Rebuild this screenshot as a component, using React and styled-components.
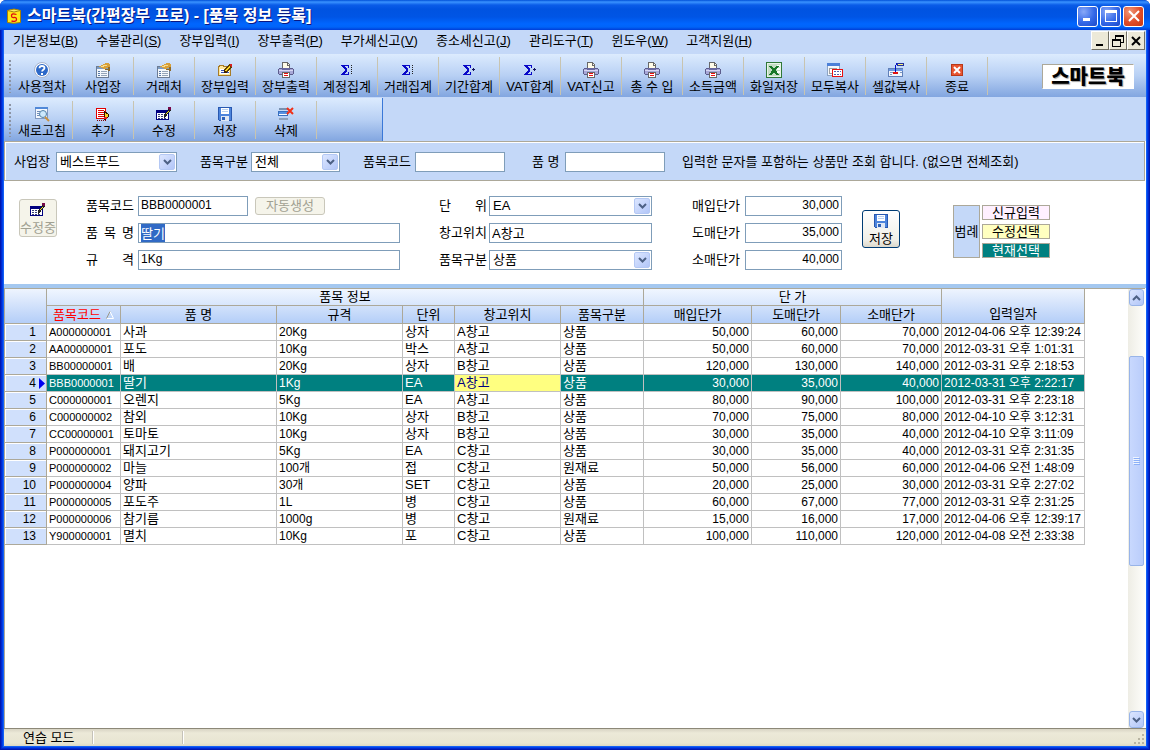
import React, { useEffect, useRef } from "react";
import styled, { createGlobalStyle } from "styled-components";

const UI_FONT = '"Liberation Sans", "Noto Sans CJK KR", sans-serif';

const GlobalStyle = createGlobalStyle`
  *, *::before, *::after { box-sizing: border-box; }
  body { margin: 0; background: #fff; }
  body, button, input, select { font-family: ${UI_FONT}; font-size: 13px; line-height: 16px; color: #000; }
  ::selection { background: #316ac5; color: #fff; }
`;

/* ---------- window frame ---------- */

const Window = styled.div`
  display: flex;
  flex-direction: column;
  min-height: 100vh;
  border-radius: 6px 6px 0 0;
  background: #0018b0;
`;

const Body = styled.main`
  flex: 1;
  display: flex;
  flex-direction: column;
  margin: 0 4px 4px;
  background: #fff;
  box-shadow: 0 0 0 1px #1460f4, 0 0 0 2px #0040e8, 0 0 0 3px #0028d0;
`;

const TitleBar = styled.header`
  position: relative;
  display: flex;
  align-items: center;
  height: 30px;
  padding: 2px 6px 0 6px;
  gap: 5px;
  border-radius: 6px 6px 0 0;
  background: linear-gradient(#0050d8 0, #3a93ff 2px, #0a5ce8 5px, #0053e1 9px, #0055e5 17px, #0066ff 24px, #0064f8 27px, #003dd7 30px);
`;

const Title = styled.h1`
  flex: 1;
  margin: 0;
  font-size: 16px;
  line-height: 20px;
  font-weight: 700;
  color: #fff;
  text-shadow: 1px 1px 0 #0a1883;
`;

const CaptionButtons = styled.div`
  display: flex;
  gap: 2px;
`;

const CaptionButton = styled.button`
  display: grid;
  place-items: center;
  width: 21px;
  height: 21px;
  padding: 0;
  border: 1px solid #fff;
  border-radius: 3px;
  background: ${(p) =>
    p.$danger
      ? "radial-gradient(circle at 30% 25%, #f09878, #e04c28 55%, #c83810)"
      : "radial-gradient(circle at 30% 25%, #88a8f8, #3468e8 55%, #1c48c8)"};
`;

/* ---------- menu ---------- */

const MenuBar = styled.nav`
  display: flex;
  align-items: flex-start;
  justify-content: space-between;
  height: 24px;
  padding: 1px 1px 0 9px;
  background: #c4d8f8;
`;

const Menu = styled.ul`
  display: flex;
  gap: 18px;
  margin: 0;
  padding: 0;
  line-height: 20px;
  list-style: none;
`;

const MenuLink = styled.a`
  color: #000;
  text-decoration: none;
  white-space: nowrap;
`;

const MdiButtons = styled.div`
  display: flex;
`;

const MdiButton = styled.button`
  display: grid;
  place-items: center;
  width: 18px;
  height: 19px;
  padding: 0;
  border: 1px solid;
  border-color: #fff #716f64 #716f64 #fff;
  background: #ece9d8;
`;

/* ---------- tool bars ---------- */

const barGradient = "linear-gradient(#dcebfe, #b8d0f4 50%, #82a6e0)";

const ToolBar = styled.div`
  display: flex;
  align-items: center;
  height: 43px;
  padding: 3px 12px 2px 4px;
  background: ${barGradient};
`;

const SubBarRow = styled.div`
  display: flex;
  padding-top: 1px;
  background: #c4d8f8;
`;

const SubToolBar = styled(ToolBar)`
  width: 379px;
  border-right: 1px solid #3a78d8;
`;

const Grip = styled.span`
  width: 4px;
  height: 34px;
  background: radial-gradient(circle, #8c94a4 1px, transparent 1px) 0 0 / 4px 4px;
`;

const ToolButton = styled.button`
  display: flex;
  flex-direction: column;
  align-items: center;
  gap: 1px;
  width: 61px;
  height: 38px;
  padding: 5px 0 0;
  border: 0;
  border-right: 1px solid #c8c4b0;
  background: transparent;
  white-space: nowrap;
`;

const Brand = styled.strong`
  margin-left: auto;
  width: 92px;
  height: 25px;
  border: 1px solid #aca899;
  border-color: #aca899 #fff #fff #aca899;
  background: #fff;
  font-size: 20px;
  line-height: 24px;
  font-weight: 900;
  text-align: center;
  text-shadow: 1px 1px 1px #a0a0a0;
`;

/* ---------- form controls ---------- */

const Label = styled.label`
  width: ${(p) => p.$width || 48}px;
  flex: none;
  white-space: nowrap;
  text-align: justify;
  text-align-last: justify;
`;

const TextBox = styled.input`
  width: ${(p) => p.$width}px;
  height: 20px;
  padding: 0 2px 2px;
  border: 1px solid #7f9db9;
  border-radius: 0;
  outline: 0;
  background: #fff;
  font-size: ${(p) => p.$size || 13}px;
  text-align: ${(p) => (p.$numeric ? "right" : "left")};
`;

const SelectFrame = styled.span`
  position: relative;
  display: flex;
  width: ${(p) => p.$width}px;
  height: 20px;
`;

const NativeSelect = styled.select`
  appearance: none;
  width: 100%;
  padding: 0 18px 1px 3px;
  border: 1px solid #7f9db9;
  border-radius: 0;
  background: #fff;
`;

const Arrow = styled.span`
  position: absolute;
  top: 2px;
  right: 2px;
  display: grid;
  place-items: center;
  width: 16px;
  height: 16px;
  border: 1px solid #b4c8f4;
  border-radius: 2px;
  background: linear-gradient(135deg, #dce6ff, #b2c6f8);
  pointer-events: none;
`;

const FilterBar = styled.form`
  display: flex;
  align-items: center;
  height: 40px;
  margin-right: 1px;
  padding: 2px 9px 0;
  border: 1px solid #aca899;
  box-shadow: inset 1px 1px 0 #fff;
  background: #c4d8f8;
`;

const FilterField = styled.div`
  display: flex;
  align-items: center;
  gap: ${(p) => p.$gap || 4}px;
  margin-right: ${(p) => p.$after}px;
`;

const Hint = styled.p`
  margin: 0;
  white-space: nowrap;
`;

const Editor = styled.form`
  display: flex;
  align-items: flex-start;
  height: 103px;
  padding: 15px;
  background: #fff;
`;

const StackButton = styled.button`
  display: flex;
  flex-direction: column;
  align-items: center;
  justify-content: space-between;
  width: 38px;
  height: 38px;
  padding: 2px 0 0;
  border: 1px solid ${(p) => (p.disabled ? "#c9c7ba" : "#003c74")};
  border-radius: 3px;
  background: ${(p) => (p.disabled ? "#f5f4ea" : "linear-gradient(#fff, #f0efe8 80%, #dcd8cc)")};
  color: ${(p) => (p.disabled ? "#a1a192" : "#000")};
  white-space: nowrap;
  margin-top: ${(p) => p.$top}px;
`;

const Fields = styled.div`
  display: flex;
  flex-direction: column;
  gap: 7px;
  margin-left: ${(p) => p.$before}px;
`;

const Field = styled.div`
  display: flex;
  align-items: center;
  gap: ${(p) => p.$gap}px;
`;

const AutoButton = styled.button`
  width: 70px;
  height: 18px;
  margin-left: 3px;
  padding: 0;
  border: 1px solid #c9c7ba;
  border-radius: 3px;
  background: #f5f4ea;
  color: #a1a192;
  line-height: 14px;
`;

const Legend = styled.aside`
  display: grid;
  grid-template-columns: 27px 68px;
  column-gap: 2px;
  height: 53px;
  margin: 9px 0 0 53px;
`;

const LegendTitle = styled.div`
  display: grid;
  place-items: center;
  border: 1px solid #aca899;
  background: #c4d8f8;
  white-space: nowrap;
`;

const LegendList = styled.div`
  display: flex;
  flex-direction: column;
  justify-content: space-between;
`;

const LegendItem = styled.div`
  height: 15px;
  border: 1px solid #aca899;
  background: ${(p) => p.$bg};
  color: ${(p) => p.$color || "#000"};
  line-height: 13px;
  text-align: center;
`;

/* ---------- grid ---------- */

const GridPane = styled.section`
  flex: 1;
  display: flex;
  justify-content: space-between;
  border-top: 4px solid #a4c8f0;
  background: #fff;
`;

const TableWrap = styled.div`
  flex: 1;
  border-top: 1px solid #aca899;
  border-left: 1px solid #aca899;
`;

const Table = styled.table`
  width: 1080px;
  table-layout: fixed;
  border-collapse: separate;
  border-spacing: 0;
`;

const HeadCell = styled.th`
  height: ${(p) => (p.$lower ? 18 : 17)}px;
  padding: ${(p) => (p.rowSpan ? "16px 0 0" : "0")};
  border-right: 1px solid #aca899;
  border-bottom: 1px solid #aca899;
  background: ${(p) =>
    p.rowSpan
      ? "linear-gradient(#eef4fe, #b4cef8)"
      : p.$lower
        ? "linear-gradient(#d2e2fb, #b4cef8)"
        : "linear-gradient(#f0f6ff, #d8e6fc)"};
  color: ${(p) => (p.$sorted ? "#f00" : "#000")};
  font-weight: 400;
  line-height: 16px;
  white-space: nowrap;
`;

const SortMark = styled.svg`
  margin-left: 5px;
`;

const RowHead = styled.th`
  height: 17px;
  padding: 0 1px 0 0;
  border-right: 1px solid #aca899;
  border-bottom: 1px solid #aca899;
  box-shadow: inset 1px 1px 0 #fff;
  background: #d0e0fc;
  font-size: 12px;
  font-weight: 400;
  line-height: 16px;
`;

const RowNumber = styled.span`
  display: flex;
  align-items: center;
  justify-content: flex-end;
  gap: 3px;
`;

const MarkSlot = styled.svg`
  display: block;
  width: 6px;
  height: 11px;
`;

const Cell = styled.td`
  height: 17px;
  padding: 0 2px;
  overflow: hidden;
  border-right: 1px solid #c0c0c0;
  border-bottom: 1px solid #c0c0c0;
  background: ${(p) => (p.$focused ? "#ffff80" : p.$current ? "#008080" : "#fff")};
  color: ${(p) => (p.$focused ? "#000080" : p.$current ? "#fff" : "#000")};
  font-size: ${(p) => p.$size}px;
  line-height: 16px;
  text-align: ${(p) => (p.$numeric ? "right" : "left")};
  vertical-align: top;
  white-space: nowrap;
`;

const ScrollTrack = styled.div`
  display: flex;
  flex-direction: column;
  width: 17px;
  margin-right: 1px;
  border-top: 1px solid #aca899;
  background: linear-gradient(90deg, #eeede5, #fefefb);
`;

const ScrollButton = styled.button`
  display: grid;
  place-items: center;
  width: 15px;
  height: 17px;
  margin: 0 1px;
  padding: 0;
  border: 1px solid #98b4e8;
  border-radius: 3px;
  background: linear-gradient(135deg, #dce6ff, #b2c6f8);
`;

const ScrollThumb = styled.div`
  display: grid;
  place-items: center;
  height: 210px;
  margin: 50px 1px auto;
  border: 1px solid #98b4e8;
  border-radius: 2px;
  background: linear-gradient(90deg, #c8d8fe, #bacdfb);
`;

/* ---------- status bar ---------- */

const StatusBar = styled.footer`
  display: flex;
  height: 18px;
  border-top: 1px solid #8c8878;
  background: linear-gradient(#d8d4c4, #ece9d8 4px, #e8e5d2 14px, #dcd8c4);
`;

const StatusCell = styled.div`
  width: ${(p) => p.$width}px;
  margin: 2px 0;
  padding-left: ${(p) => p.$indent || 0}px;
  border-right: 1px solid #c5c2b8;
  box-shadow: 1px 0 0 #fff;
  line-height: 14px;
`;

const SizeGrip = styled.svg`
  margin: auto 1px 1px auto;
`;

/* ---------- drawings ---------- */

const Icon = ({ children }) => (
  <svg width="16" height="16" viewBox="0 0 16 16" shapeRendering="crispEdges" aria-hidden="true">
    {children}
  </svg>
);

const Chevron = ({ up }) => (
  <svg width="9" height="6" viewBox="0 0 9 6" aria-hidden="true">
    <path d={up ? "M1 5l3.500-3.500L8 5" : "M1 1l3.500 3.500L8 1"} fill="none" stroke="#4d6185" strokeWidth="2" />
  </svg>
);

const HelpIcon = () => (
  <svg width="16" height="16" viewBox="0 0 16 16" aria-hidden="true">
    <circle cx="8" cy="8" r="7.500" fill="#fff" stroke="#a8b4cc" />
    <circle cx="8" cy="8" r="6" fill="#2c68c8" />
    <path d="M5.500 6.200C5.500 3.200 10.500 3.400 10.500 6c0 1.800-2.400 1.800-2.400 3.600" fill="none" stroke="#fff" strokeWidth="1.800" />
    <rect x="7" y="11" width="2" height="2" fill="#fff" />
  </svg>
);

const PropsIcon = () => (
  <Icon>
    <path d="M1.500 4.500h12v11h-12z" fill="#f4f8fc" stroke="#6c7c94" />
    <path d="M2 5h11v2H2z" fill="#7c9cc4" />
    <path d="M3 9h2M3 11h2M3 13h2" stroke="#5878a8" transform="translate(0 .5)" />
    <path d="M6 9h6M6 11h6M6 13h6" stroke="#94a4b8" transform="translate(0 .5)" />
    <path d="M4 4h2V3h2V2h2V1h4v1h1v7h-2V6h-2v1H8V6H6V5H4z" fill="#d8a038" />
    <path d="M8 3h4v1H8zM6 4h3v1H6z" fill="#f8dc90" />
    <path d="M10 7h3v1h-3zM13 5h2v4h-2z" fill="#8c6828" />
  </Icon>
);

const EntryIcon = () => (
  <Icon>
    <path d="M1.500 13.500v-9h1v-1h4v1h7v9z" fill="#ffe89c" stroke="#a87c28" />
    <path d="M3 7h9v5H3z" fill="#fff" />
    <path d="M4 8.500h4M4 10.500h5M10 10.500h2" stroke="#3850b0" />
    <path d="M7.500 10V8l5-5 2 2-5 5z" fill="#ffd820" stroke="#604000" />
    <path d="M7 11V8l3 3z" fill="#402000" />
    <path d="M12 3l1-1h1l1 1v1l-1 1z" fill="#d82020" />
  </Icon>
);

const PrinterIcon = () => (
  <Icon>
    <path d="M4.500 7.500v-7h5l2 2v5z" fill="#fffce8" stroke="#686868" />
    <path d="M9.500 1v2h2" fill="none" stroke="#686868" />
    <path d="M1.500 6.500h13l1 1v4l-1 1h-13l-1-1v-4z" fill="#a8a8d8" stroke="#5c5c8c" />
    <path d="M1 8h14v1H1z" fill="#d8d8f4" />
    <path d="M4 6h8v2H4z" fill="#6868a0" />
    <path d="M4.500 10.500h7v5h-7z" fill="#fff" stroke="#686868" />
    <path d="M6 11h4v1H6zM6 13h4v1H6z" fill="#e81010" />
  </Icon>
);

const SigmaIcon = ({ plus }) => (
  <Icon>
    <path d="M2 3h8v3H9V4H5l3 3v2l-3 3h4v-2h1v3H2v-1l4-4-4-4z" fill="#0808c8" />
    {plus ? (
      <path d="M11 7.500h3M12.500 6v3" stroke="#101060" />
    ) : (
      <path d="M12.500 3v10" stroke="#202020" strokeDasharray="1 1" />
    )}
  </Icon>
);

const ExcelIcon = () => (
  <Icon>
    <path d="M.5.500h15v15H.5z" fill="#e8f4e8" stroke="#307838" />
    <path d="M2 2h12v12H2z" fill="#c4dcc4" />
    <path d="M11 3h3v2h-3zM11 6h3v2h-3zM11 9h3v2h-3z" fill="#f8fff8" />
    <path d="M3 4h3l2 3 2-3h3L9.500 8l3.500 5h-3L8 10l-2 3H3l3.500-5z" fill="#187828" />
  </Icon>
);

const CopyAllIcon = () => (
  <Icon>
    <path d="M.5 1.500h12v12H.5z" fill="#f4f8fc" stroke="#8ca4c4" />
    <path d="M0 1h13v3H0z" fill="#4c80d8" />
    <path d="M2.500 6.500h7v5h-7z" fill="#fff" stroke="#a0a0a0" />
    <path d="M5.500 7.500h10v7h-10z" fill="#fff" stroke="#e81010" />
    <path d="M7 9.500h2M10 9.500h2M13 9.500h1M7 12.500h2M10 12.500h2M13 12.500h1" stroke="#5060b0" />
  </Icon>
);

const CopyCellIcon = () => (
  <Icon>
    <path d="M.5 6.500h14v8H.5z" fill="#f0f4fc" stroke="#6080b8" />
    <path d="M1 7h14v2H1z" fill="#6c98e0" />
    <path d="M2 10.500h4M2 12.500h2M12 10.500h2" stroke="#8098c0" />
    <path d="M7.500 11V3.500L9 1.500" fill="none" stroke="#0010c8" />
    <path d="M9.500 1.500h6v2h-6z" fill="#fff470" stroke="#2030a0" />
    <path d="M5 10h5v2H5z" fill="#e01010" />
  </Icon>
);

const ExitIcon = () => (
  <Icon>
    <path d="M2.500 2.500h11v11h-11z" fill="#e85430" stroke="#b83818" />
    <path d="M5 5l6 6M11 5l-6 6" stroke="#fff" strokeWidth="2" shapeRendering="auto" />
  </Icon>
);

const RefreshIcon = () => (
  <Icon>
    <path d="M1.500 1.500h12v11h-12z" fill="#f4f8fe" stroke="#8098c0" />
    <path d="M1 1h13v2H1z" fill="#5088d8" />
    <path d="M3 5.500h3M3 7.500h2M3 9.500h3" stroke="#708cb8" />
    <circle cx="9" cy="8" r="3.500" fill="#cce8fc" stroke="#5080a8" shapeRendering="auto" />
    <path d="M11 11l4 4" stroke="#c89040" strokeWidth="2" shapeRendering="auto" />
  </Icon>
);

const AddIcon = () => (
  <Icon>
    <path d="M1.500 2.500h9v10h-9z" fill="#fff" stroke="#e00000" />
    <path d="M3 4.500h6M3 6.500h6M3 8.500h6M3 10.500h6" stroke="#e00000" />
    <path d="M2 14.500h9" stroke="#800000" strokeDasharray="1 1" />
    <path d="M9.500 5.500l4 3v2l-3 3h-1z" fill="#f8d020" stroke="#301000" />
    <path d="M9 11h3v2H9z" fill="#f02020" />
  </Icon>
);

const ModifyIcon = () => (
  <Icon>
    <path d="M.5 4.500h12v9H.5z" fill="#fff" stroke="#000080" />
    <path d="M0 4h13v3H0z" fill="#000080" />
    <path d="M2 8.500h9M2 10.500h9M2 12h9" stroke="#384078" strokeDasharray="2 1" />
    <path d="M8.500 11V9l5-6 1 1-5 6z" fill="#f0e030" stroke="#202020" />
    <path d="M12 1h3v3h-2z" fill="#780848" />
  </Icon>
);

const DiskIcon = () => (
  <Icon>
    <path d="M1.500 1.500h13v13h-12l-1-1z" fill="#4c84dc" stroke="#2858b0" />
    <path d="M4 2h8v6H4z" fill="#fff" />
    <path d="M5 3.500h6M5 5.500h6" stroke="#b8d0f0" />
    <path d="M4 10h8v5H4z" fill="#e0e8f4" />
    <path d="M5 11h3v3H5z" fill="#2c60b8" />
  </Icon>
);

const DeleteIcon = () => (
  <Icon>
    <path d="M1 2h9v2H1z" fill="#7890b0" />
    <path d="M.5 5.500h9v4h-9z" fill="#fff" stroke="#3870c0" />
    <path d="M1 6h9v2H1z" fill="#5890e0" />
    <path d="M1 11.500h9v2H1z" fill="#8ca0bc" />
    <path d="M9 2l6 6M15 2L9 8" stroke="#f03018" strokeWidth="2" shapeRendering="auto" />
  </Icon>
);

const AppIcon = () => (
  <svg width="16" height="16" viewBox="0 0 16 16" aria-hidden="true">
    <path d="M1.500 2.500q6.500-3 13 0v12q-6.500 1.500-13 0z" fill="#ffe818" stroke="#a88000" />
    <path d="M1.500 2.500q6.500 3 13 0" fill="#fff8a0" stroke="#a88000" />
    <path d="M10.500 6.500Q5.500 5 5.500 7.500t2.500 2 2.500 2T5.500 13" fill="none" stroke="#e01010" strokeWidth="1.300" />
  </svg>
);

/* ---------- data ---------- */

const MENUS = [
  ["기본정보", "B"], ["수불관리", "S"], ["장부입력", "I"], ["장부출력", "P"], ["부가세신고", "V"],
  ["종소세신고", "J"], ["관리도구", "T"], ["윈도우", "W"], ["고객지원", "H"],
];

const TOOLS = [
  ["사용절차", <HelpIcon />], ["사업장", <PropsIcon />], ["거래처", <PropsIcon />], ["장부입력", <EntryIcon />],
  ["장부출력", <PrinterIcon />], ["계정집계", <SigmaIcon />], ["거래집계", <SigmaIcon />], ["기간합계", <SigmaIcon plus />],
  ["VAT합계", <SigmaIcon plus />], ["VAT신고", <PrinterIcon />], ["총 수 입", <PrinterIcon />], ["소득금액", <PrinterIcon />],
  ["화일저장", <ExcelIcon />], ["모두복사", <CopyAllIcon />], ["셀값복사", <CopyCellIcon />], ["종료", <ExitIcon />],
];

const ACTIONS = [
  ["새로고침", <RefreshIcon />], ["추가", <AddIcon />], ["수정", <ModifyIcon />], ["저장", <DiskIcon />], ["삭제", <DeleteIcon />],
];

const COLUMN_WIDTHS = [42, 74, 156, 126, 52, 106, 83, 108, 89, 101, 143];

/* text size of each data column: codes and sizes are set smaller than names */
const COLUMN_SIZES = [11, 13, 12, 13, 13, 13, 12, 12, 12, 12];

const ROWS = [
  ["A000000001", "사과", "20Kg", "상자", "A창고", "상품", "50,000", "60,000", "70,000", "2012-04-06 오후 12:39:24"],
  ["AA00000001", "포도", "10Kg", "박스", "A창고", "상품", "50,000", "60,000", "70,000", "2012-03-31 오후 1:01:31"],
  ["BB00000001", "배", "20Kg", "상자", "B창고", "상품", "120,000", "130,000", "140,000", "2012-03-31 오후 2:18:53"],
  ["BBB0000001", "딸기", "1Kg", "EA", "A창고", "상품", "30,000", "35,000", "40,000", "2012-03-31 오후 2:22:17"],
  ["C000000001", "오렌지", "5Kg", "EA", "A창고", "상품", "80,000", "90,000", "100,000", "2012-03-31 오후 2:23:18"],
  ["C000000002", "참외", "10Kg", "상자", "B창고", "상품", "70,000", "75,000", "80,000", "2012-04-10 오후 3:12:31"],
  ["CC00000001", "토마토", "10Kg", "상자", "B창고", "상품", "30,000", "35,000", "40,000", "2012-04-10 오후 3:11:09"],
  ["P000000001", "돼지고기", "5Kg", "EA", "C창고", "상품", "30,000", "35,000", "40,000", "2012-03-31 오후 2:31:35"],
  ["P000000002", "마늘", "100개", "접", "C창고", "원재료", "50,000", "56,000", "60,000", "2012-04-06 오전 1:48:09"],
  ["P000000004", "양파", "30개", "SET", "C창고", "상품", "20,000", "25,000", "30,000", "2012-03-31 오후 2:27:02"],
  ["P000000005", "포도주", "1L", "병", "C창고", "상품", "60,000", "67,000", "77,000", "2012-03-31 오후 2:31:25"],
  ["P000000006", "참기름", "1000g", "병", "C창고", "원재료", "15,000", "16,000", "17,000", "2012-04-06 오후 12:39:17"],
  ["Y900000001", "멸치", "10Kg", "포", "C창고", "상품", "100,000", "110,000", "120,000", "2012-04-08 오전 2:33:38"],
];

const CURRENT_ROW = 3;
const FOCUSED_COLUMN = 4;

/* ---------- parts ---------- */

const Select = ({ id, width, value }) => (
  <SelectFrame $width={width}>
    <NativeSelect id={id} defaultValue={value}>
      <option>{value}</option>
    </NativeSelect>
    <Arrow><Chevron /></Arrow>
  </SelectFrame>
);

const ItemTable = () => (
  <Table>
    <colgroup>
      {COLUMN_WIDTHS.map((w, i) => <col key={i} width={w} />)}
    </colgroup>
    <thead>
      <tr>
        <HeadCell rowSpan={2} />
        <HeadCell colSpan={6}>품목 정보</HeadCell>
        <HeadCell colSpan={3}>단 가</HeadCell>
        <HeadCell rowSpan={2}>입력일자</HeadCell>
      </tr>
      <tr>
        <HeadCell $lower $sorted>
          품목코드
          <SortMark width="8" height="8" viewBox="0 0 8 8" aria-hidden="true">
            <path d="M4 .5l3.500 7h-7" stroke="#fff" fill="none" />
            <path d="M4 .5L.5 7.500" stroke="#9c9888" fill="none" />
          </SortMark>
        </HeadCell>
        {["품 명", "규격", "단위", "창고위치", "품목구분", "매입단가", "도매단가", "소매단가"].map((name) => (
          <HeadCell key={name} $lower>{name}</HeadCell>
        ))}
      </tr>
    </thead>
    <tbody>
      {ROWS.map((row, r) => (
        <tr key={row[0]}>
          <RowHead scope="row">
            <RowNumber>
              {r + 1}
              <MarkSlot viewBox="0 0 6 11" aria-hidden="true">
                {r === CURRENT_ROW && <path d="M0 0l6 5.500L0 11z" fill="#0000f0" />}
              </MarkSlot>
            </RowNumber>
          </RowHead>
          {row.map((text, c) => (
            <Cell
              key={c}
              $size={COLUMN_SIZES[c]}
              $numeric={c >= 6 && c <= 8}
              $current={r === CURRENT_ROW}
              $focused={r === CURRENT_ROW && c === FOCUSED_COLUMN}
            >
              {text}
            </Cell>
          ))}
        </tr>
      ))}
    </tbody>
  </Table>
);

export default function App() {
  const nameRef = useRef(null);

  useEffect(() => {
    nameRef.current.focus();
    nameRef.current.select();
  }, []);

  return (
    <>
      <GlobalStyle />
      <Window>
        <TitleBar>
          <AppIcon />
          <Title>스마트북(간편장부 프로) - [품목 정보 등록]</Title>
          <CaptionButtons>
            <CaptionButton aria-label="최소화">
              <Icon><path d="M3 10h7v3H3z" fill="#fff" /></Icon>
            </CaptionButton>
            <CaptionButton aria-label="최대화">
              <Icon><path d="M2 2h12v12H2zM3 5v8h10V5z" fill="#fff" fillRule="evenodd" /></Icon>
            </CaptionButton>
            <CaptionButton $danger aria-label="닫기">
              <Icon><path d="M3 3l10 10M13 3L3 13" stroke="#fff" strokeWidth="2" shapeRendering="auto" /></Icon>
            </CaptionButton>
          </CaptionButtons>
        </TitleBar>

        <Body>
          <MenuBar>
            <Menu>
              {MENUS.map(([name, key]) => (
                <li key={key}>
                  <MenuLink href="#">{name}(<u>{key}</u>)</MenuLink>
                </li>
              ))}
            </Menu>
            <MdiButtons>
              <MdiButton aria-label="창 최소화">
                <Icon><path d="M4 11h7v2H4z" /></Icon>
              </MdiButton>
              <MdiButton aria-label="창 복원">
                <Icon><path d="M5 2h9v8h-3v4H2V6h3zM6 4v2h5v3h2V4zM3 8v5h7V8z" fillRule="evenodd" /></Icon>
              </MdiButton>
              <MdiButton aria-label="창 닫기">
                <Icon><path d="M4 4l8 8M12 4l-8 8" stroke="#000" strokeWidth="2" shapeRendering="auto" /></Icon>
              </MdiButton>
            </MdiButtons>
          </MenuBar>

          <ToolBar role="toolbar">
            <Grip />
            {TOOLS.map(([name, icon]) => (
              <ToolButton key={name}>{icon}{name}</ToolButton>
            ))}
            <Brand>스마트북</Brand>
          </ToolBar>
          <SubBarRow>
            <SubToolBar role="toolbar">
              <Grip />
              {ACTIONS.map(([name, icon]) => (
                <ToolButton key={name}>{icon}{name}</ToolButton>
              ))}
            </SubToolBar>
          </SubBarRow>

          <FilterBar>
            <FilterField $gap={6} $after={23}>
              <Label htmlFor="f-site" $width={36}>사업장</Label>
              <Select id="f-site" width={121} value="베스트푸드" />
            </FilterField>
            <FilterField $gap={3} $after={23}>
              <Label htmlFor="f-kind">품목구분</Label>
              <Select id="f-kind" width={89} value="전체" />
            </FilterField>
            <FilterField $after={27}>
              <Label htmlFor="f-code">품목코드</Label>
              <TextBox id="f-code" $width={90} />
            </FilterField>
            <FilterField $gap={6} $after={17}>
              <Label htmlFor="f-name" $width={27}>품 명</Label>
              <TextBox id="f-name" $width={100} />
            </FilterField>
            <Hint>입력한 문자를 포함하는 상품만 조회 합니다. (없으면 전체조회)</Hint>
          </FilterBar>

          <Editor>
            <StackButton type="button" disabled $top={3}><ModifyIcon />수정중</StackButton>
            <Fields $before={29}>
              <Field $gap={4}>
                <Label htmlFor="e-code">품목코드</Label>
                <TextBox id="e-code" $width={110} $size={12} defaultValue="BBB0000001" />
                <AutoButton type="button" disabled>자동생성</AutoButton>
              </Field>
              <Field $gap={4}>
                <Label htmlFor="e-name">품 목 명</Label>
                <TextBox id="e-name" ref={nameRef} $width={262} defaultValue="딸기" />
              </Field>
              <Field $gap={4}>
                <Label htmlFor="e-spec">규 격</Label>
                <TextBox id="e-spec" $width={262} $size={12} defaultValue="1Kg" />
              </Field>
            </Fields>
            <Fields $before={39}>
              <Field $gap={2}>
                <Label htmlFor="e-unit">단 위</Label>
                <Select id="e-unit" width={163} value="EA" />
              </Field>
              <Field $gap={2}>
                <Label htmlFor="e-place">창고위치</Label>
                <TextBox id="e-place" $width={163} defaultValue="A창고" />
              </Field>
              <Field $gap={2}>
                <Label htmlFor="e-kind">품목구분</Label>
                <Select id="e-kind" width={163} value="상품" />
              </Field>
            </Fields>
            <Fields $before={40}>
              <Field $gap={5}>
                <Label htmlFor="e-buy">매입단가</Label>
                <TextBox id="e-buy" $width={97} $size={12} $numeric defaultValue="30,000" />
              </Field>
              <Field $gap={5}>
                <Label htmlFor="e-whole">도매단가</Label>
                <TextBox id="e-whole" $width={97} $size={12} $numeric defaultValue="35,000" />
              </Field>
              <Field $gap={5}>
                <Label htmlFor="e-retail">소매단가</Label>
                <TextBox id="e-retail" $width={97} $size={12} $numeric defaultValue="40,000" />
              </Field>
            </Fields>
            <Fields $before={20}>
              <StackButton type="button" $top={14}><DiskIcon />저장</StackButton>
            </Fields>
            <Legend>
              <LegendTitle>범례</LegendTitle>
              <LegendList>
                <LegendItem $bg="#fff0ff">신규입력</LegendItem>
                <LegendItem $bg="#ffffc0">수정선택</LegendItem>
                <LegendItem $bg="#008080" $color="#fff">현재선택</LegendItem>
              </LegendList>
            </Legend>
          </Editor>

          <GridPane>
            <TableWrap><ItemTable /></TableWrap>
            <ScrollTrack>
              <ScrollButton aria-label="위로"><Chevron up /></ScrollButton>
              <ScrollThumb>
                <svg width="7" height="8" viewBox="0 0 7 8" shapeRendering="crispEdges" aria-hidden="true">
                  <path d="M0 .5h6M0 2.500h6M0 4.500h6M0 6.500h6" stroke="#eef4fe" />
                  <path d="M1 1.500h6M1 3.500h6M1 5.500h6M1 7.500h6" stroke="#8cb0f8" />
                </svg>
              </ScrollThumb>
              <ScrollButton aria-label="아래로"><Chevron /></ScrollButton>
            </ScrollTrack>
          </GridPane>

          <StatusBar>
            <StatusCell $width={89} $indent={19}>연습 모드</StatusCell>
            <StatusCell $width={90} />
            <SizeGrip width="12" height="12" viewBox="0 0 12 12" shapeRendering="crispEdges" aria-hidden="true">
              <path d="M9 1h2v2H9zM5 5h2v2H5zM9 5h2v2H9zM1 9h2v2H1zM5 9h2v2H5zM9 9h2v2H9z" fill="#b8b4a2" />
            </SizeGrip>
          </StatusBar>
        </Body>
      </Window>
    </>
  );
}
